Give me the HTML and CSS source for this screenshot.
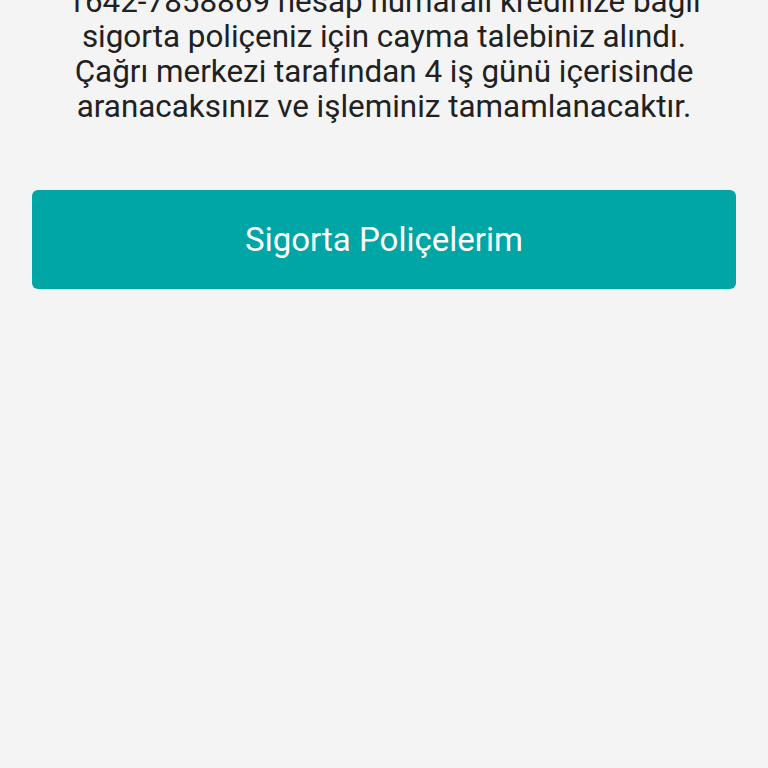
FILE: index.html
```html
<!DOCTYPE html>
<html lang="tr">

<head>
    <meta charset="UTF-8">
    <meta name="viewport" content="width=device-width, initial-scale=1.0">
    <title>Cayma Talebi</title>
    <link rel="stylesheet" href="styles.css">
</head>

<body>
    <div class="container">
        <p class="message">
            1642-7858869 hesap numaralı kredinize bağlı<br>
            sigorta poliçeniz için cayma talebiniz alındı.<br>
            Çağrı merkezi tarafından 4 iş günü içerisinde<br>
            aranacaksınız ve işleminiz tamamlanacaktır.
        </p>
        <button type="button" class="primary-btn">Sigorta Poliçelerim</button>
    </div>
</body>

</html>
```

FILE: styles.css
```css
body {
    font-family: Roboto, "Noto Sans", sans-serif;
    background-color: #f4f4f4;
    margin: 0;
    height: 100vh;
    overflow: hidden;
}

.container {
    padding: 0 32px;
    margin-top: -16px;
}

.message {
    margin: 0 0 66px;
    font-size: 31.4px;
    line-height: 35px;
    color: #212121;
    text-align: center;
    white-space: nowrap;
}

.primary-btn {
    display: block;
    width: 100%;
    height: 99px;
    background-color: #00a5a5;
    color: #fff;
    border: none;
    border-radius: 6px;
    font-family: Roboto, "Noto Sans", sans-serif;
    font-size: 33px;
    cursor: pointer;
}
```
